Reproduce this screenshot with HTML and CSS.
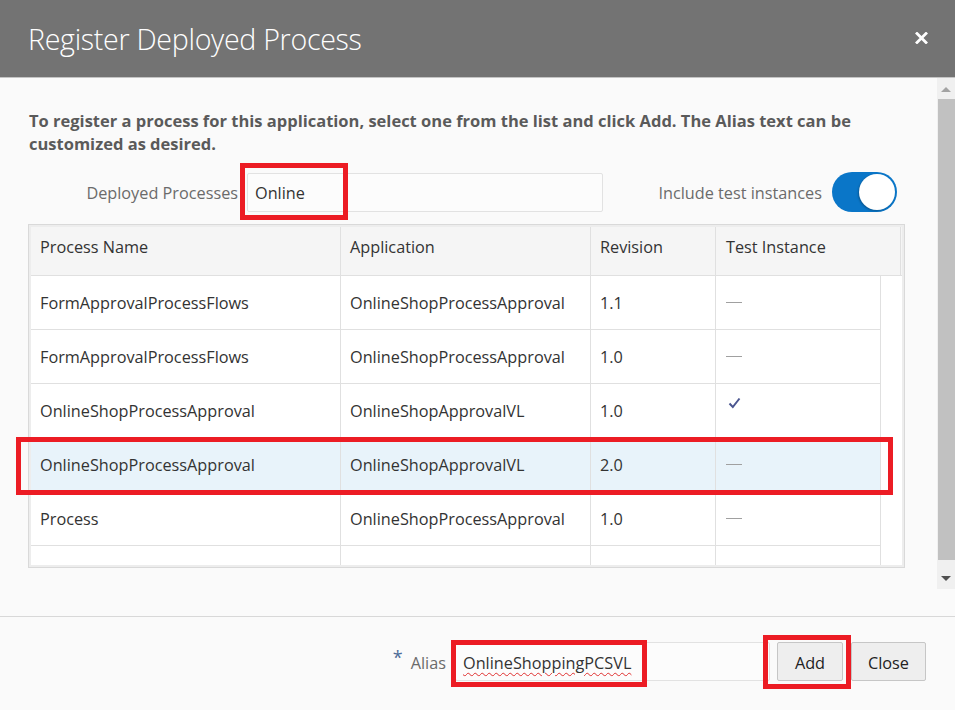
FILE: index.html
```html
<!DOCTYPE html>
<html lang="en">
<head>
<meta charset="utf-8">
<title>Register Deployed Process</title>
<link rel="stylesheet" href="styles.css">
</head>
<body>
<div class="dialog">
  <header class="hdr">
    <h1 class="title">Register Deployed Process</h1>
    <svg class="close" width="13" height="12" viewBox="0 0 13 12" aria-label="Close"><path d="M2 1.5 L11 10.5 M11 1.5 L2 10.5" stroke="#fff" stroke-width="2.8" stroke-linecap="square"/></svg>
  </header>

  <div class="main">
    <div class="content">
      <p class="intro">To register a process for this application, select one from the list and click Add. The Alias text can be customized as desired.</p>

      <div class="filters">
        <div class="field">
          <label class="lbl lbl-dp">Deployed Processes</label>
          <div class="input input-dp">
            <span class="val">Online</span>
            <span class="mark mark-online"></span>
          </div>
        </div>
        <div class="switch-field">
          <span class="lbl">Include test instances</span>
          <span class="switch"><span class="knob"></span></span>
        </div>
      </div>

      <div class="table">
        <div class="thead">
          <div class="th c1">Process Name</div>
          <div class="th c2">Application</div>
          <div class="th c3">Revision</div>
          <div class="th c4">Test Instance</div>
        </div>
        <div class="tbody">
          <div class="tr">
            <div class="td c1">FormApprovalProcessFlows</div>
            <div class="td c2">OnlineShopProcessApproval</div>
            <div class="td c3">1.1</div>
            <div class="td c4"><span class="dash"></span></div>
          </div>
          <div class="tr">
            <div class="td c1">FormApprovalProcessFlows</div>
            <div class="td c2">OnlineShopProcessApproval</div>
            <div class="td c3">1.0</div>
            <div class="td c4"><span class="dash"></span></div>
          </div>
          <div class="tr">
            <div class="td c1">OnlineShopProcessApproval</div>
            <div class="td c2">OnlineShopApprovalVL</div>
            <div class="td c3">1.0</div>
            <div class="td c4 top"><svg class="check" width="13" height="12" viewBox="0 0 13 12"><path d="M1.5 6.5 L4.8 10 L11.5 1.5" fill="none" stroke="#4b5690" stroke-width="2"/></svg></div>
          </div>
          <div class="tr selected">
            <div class="td c1">OnlineShopProcessApproval</div>
            <div class="td c2">OnlineShopApprovalVL</div>
            <div class="td c3">2.0</div>
            <div class="td c4"><span class="dash"></span></div>
          </div>
          <div class="tr">
            <div class="td c1">Process</div>
            <div class="td c2">OnlineShopProcessApproval</div>
            <div class="td c3">1.0</div>
            <div class="td c4"><span class="dash"></span></div>
          </div>
          <div class="tr">
            <div class="td c1"></div>
            <div class="td c2"></div>
            <div class="td c3"></div>
            <div class="td c4"></div>
          </div>
        </div>
        <span class="mark mark-row"></span>
      </div>
    </div>

    <div class="scrollbar">
      <span class="arrow up"></span>
      <span class="thumb"></span>
      <span class="arrow down"></span>
    </div>
  </div>

  <footer class="ftr">
    <span class="req">*</span>
    <label class="lbl lbl-alias">Alias</label>
    <div class="input input-alias">
      <span class="val spell">OnlineShoppingPCSVL</span>
      <span class="mark mark-alias"></span>
    </div>
    <button class="btn btn-add">Add<span class="mark mark-add"></span></button>
    <button class="btn btn-close">Close</button>
  </footer>
</div>
</body>
</html>
```

FILE: styles.css
```css
* { box-sizing: border-box; }

html, body {
  margin: 0;
  padding: 0;
  background: #fafafa;
}

body {
  font-family: "Open Sans", "Noto Sans", "Liberation Sans", sans-serif;
  font-size: 16.25px;
  color: #333;
}

.dialog {
  width: 955px;
  height: 710px;
  display: flex;
  flex-direction: column;
  background: #fafafa;
  overflow: hidden;
}

/* header */
.hdr {
  height: 78px;
  flex: none;
  background: #737373;
  border-bottom: 1px solid #c4c4c4;
  display: flex;
  align-items: center;
  justify-content: space-between;
  padding: 0 27px 0 28px;
}

.title {
  margin: 0;
  font-weight: 300;
  font-size: 28.6px;
  color: #fff;
  letter-spacing: -0.3px;
}

.close {
  display: block;
  margin-top: -2px;
}

/* main scroll area */
.main {
  flex: 1;
  display: flex;
  min-height: 0;
  border-bottom: 1px solid #d8d8d8;
}

.content {
  flex: 1;
  padding: 31px 32px 0 29px;
}

.intro {
  margin: 0;
  font-weight: 700;
  font-size: 16.5px;
  line-height: 23px;
  color: #5a5a5a;
}

.filters {
  margin-top: 17px;
  display: flex;
  align-items: center;
  justify-content: space-between;
  padding-right: 8px;
}

.field {
  display: flex;
  align-items: center;
}

.lbl {
  color: #6b6b6b;
  padding-top: 2px;
}

.lbl-dp {
  width: 218px;
  text-align: right;
  padding-right: 9px;
  white-space: nowrap;
}

.input {
  position: relative;
  height: 39px;
  border: 1px solid #e2e2e2;
  border-radius: 2px;
  background: #fcfcfc;
  display: flex;
  align-items: center;
  padding: 2px 0 0 7px;
  color: #333;
}

.input-dp {
  width: 356px;
}

.switch-field {
  display: flex;
  align-items: center;
  gap: 10px;
}

.switch {
  position: relative;
  width: 65px;
  height: 40px;
  border-radius: 20px;
  background: #0a76c8;
  display: flex;
  align-items: center;
  justify-content: flex-end;
  padding-right: 2px;
}

.knob {
  width: 36px;
  height: 36px;
  border-radius: 50%;
  background: #fff;
  box-shadow: -1px 1px 2px rgba(0, 0, 0, 0.25);
}

/* table */
.table {
  position: relative;
  margin: 12px 0 0 -1px;
  border: 1px solid #d9d9d9;
  padding: 2px;
  background: #ededed;
}

.thead {
  display: flex;
  height: 49px;
  background: #f5f5f5;
  border-bottom: 1px solid #e0e0e0;
}

.th {
  display: flex;
  align-items: center;
  border-right: 1px solid #e0e0e0;
  padding-left: 9px;
  padding-bottom: 8px;
  color: #333;
}

.thead .c4 {
  width: 185px;
}

.tbody {
  height: 289px;
  overflow: hidden;
  background: #fff;
}

.tr {
  display: flex;
  height: 54px;
  width: 850px;
  border-bottom: 1px solid #e0e0e0;
}

.tr.selected {
  background: #e8f3fa;
}

.td {
  display: flex;
  align-items: center;
  border-right: 1px solid #e0e0e0;
  padding-left: 9px;
  color: #333;
}

.c1 { width: 310px; }
.c2 { width: 250px; }
.c3 { width: 125px; }
.c4 { width: 165px; padding-left: 10px; }

.td.top {
  align-items: flex-start;
  padding-top: 13px;
}

.dash {
  display: block;
  width: 16px;
  height: 1px;
  background: #a0a0a0;
}

.check {
  display: block;
  margin-left: 2px;
}

/* scrollbar */
.scrollbar {
  width: 18px;
  height: 511px;
  flex: none;
  background: #f0f0f0;
  display: flex;
  flex-direction: column;
  align-items: center;
}

.arrow {
  width: 0;
  height: 0;
  border-left: 5px solid transparent;
  border-right: 5px solid transparent;
}

.arrow.up {
  margin-top: 9px;
  border-bottom: 5px solid #a3a3a3;
}

.thumb {
  margin-top: 7px;
  width: 17px;
  height: 461px;
  margin-left: 1px;
  background: #c1c1c1;
}

.arrow.down {
  margin-top: 16px;
  border-top: 5px solid #505050;
}

/* footer */
.ftr {
  flex: none;
  height: 93px;
  display: flex;
  justify-content: flex-end;
  align-items: flex-start;
  padding: 25px 29px 0 0;
}

.req {
  color: #4e6c98;
  font-size: 18px;
  line-height: 18px;
  margin-top: 6px;
  margin-right: 8px;
}

.lbl-alias {
  line-height: 39px;
  margin-right: 9px;
}

.input-alias {
  width: 315px;
}

.spell {
  text-decoration: underline wavy #e03030;
  text-decoration-thickness: 1px;
  text-underline-offset: 3px;
}

.btn {
  position: relative;
  height: 39px;
  border: 1px solid #c6c6c6;
  border-radius: 2px;
  background: #eeeeee;
  font-family: inherit;
  font-size: 16.25px;
  color: #222;
  padding: 2px 0 0;
}

.btn-add {
  width: 66px;
  margin-left: 7px;
}

.btn-close {
  width: 75px;
  margin-left: 8px;
}

/* red annotation boxes */
.mark {
  position: absolute;
  border: 5px solid #ec1c24;
  pointer-events: none;
}

.mark-online {
  left: -8px;
  top: -11px;
  width: 108px;
  height: 57px;
}

.mark-row {
  left: -13px;
  top: 212px;
  width: 877px;
  height: 58px;
}

.mark-alias {
  left: -5px;
  top: -3px;
  width: 196px;
  height: 47px;
}

.mark-add {
  left: -15px;
  top: -8px;
  width: 88px;
  height: 54px;
}
```
